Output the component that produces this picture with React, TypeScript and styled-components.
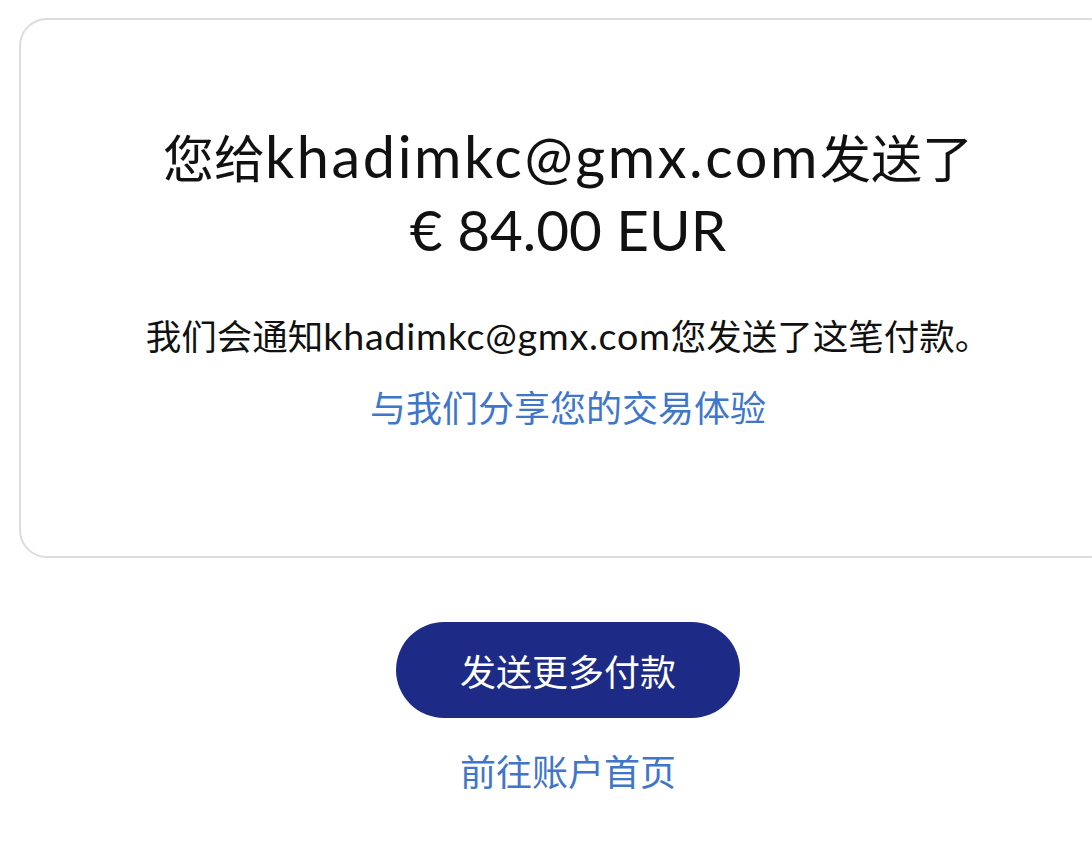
import styled, { createGlobalStyle } from "styled-components";

const GlobalStyle = createGlobalStyle`
  html, body {
    margin: 0;
    padding: 0;
    background: #ffffff;
    overflow: hidden;
  }
  body {
    font-family: "Lato", "Noto Sans CJK SC", sans-serif;
    color: #1a1a1a;
  }
`;

const EMAIL = "khadimkc@gmx.com";

const App = () => {
  return (
    <Page>
      <GlobalStyle />
      <Card>
        <Heading>
          您给<Latin $scale={1.13} $spacing={0.045}>{EMAIL}</Latin>发送了
          <br />
          <Latin $scale={1.11}>€ 84.00 EUR</Latin>
        </Heading>
        <Notice>
          我们会通知<Latin $scale={1.06} $spacing={0.02}>{EMAIL}</Latin>您发送了这笔付款。
        </Notice>
        <TextLink href="#">与我们分享您的交易体验</TextLink>
      </Card>

      <Actions>
        <PrimaryButton type="button">发送更多付款</PrimaryButton>
        <TextLink href="#">前往账户首页</TextLink>
      </Actions>
    </Page>
  );
};

const Page = styled.div`
  width: 100%;
  min-height: 842px;
  padding: 18px 0 0 19px;
  box-sizing: border-box;
  display: flex;
  flex-direction: column;
  align-items: flex-start;
`;

const Card = styled.section`
  width: 1098px;
  flex-shrink: 0;
  box-sizing: border-box;
  border: 2px solid #dcdcdc;
  border-radius: 28px;
  padding: 101px 20px 124px;
  display: flex;
  flex-direction: column;
  align-items: center;
  text-align: center;
`;

const Latin = styled.span<{ $scale: number; $spacing?: number }>`
  font-family: "Lato", sans-serif;
  font-size: ${(p) => p.$scale}em;
  letter-spacing: ${(p) => p.$spacing ?? 0}em;
`;

const Heading = styled.h1`
  margin: 0;
  font-size: 51px;
  line-height: 70px;
  font-weight: 400;
  color: #111111;
`;

const Notice = styled.p`
  margin: 45px 0 0;
  font-size: 35.5px;
  line-height: 48px;
  color: #111111;
`;

const TextLink = styled.a`
  margin-top: 23px;
  font-size: 36px;
  line-height: 48px;
  color: #3f76c9;
  text-decoration: none;
`;

const Actions = styled.div`
  width: 1098px;
  flex-shrink: 0;
  margin-top: 64px;
  display: flex;
  flex-direction: column;
  align-items: center;

  ${TextLink} {
    margin-top: 30px;
  }
`;

const PrimaryButton = styled.button`
  width: 344px;
  height: 96px;
  border: none;
  border-radius: 48px;
  background: #1d2b86;
  color: #ffffff;
  font-family: "Lato", "Noto Sans CJK SC", sans-serif;
  font-size: 36px;
  cursor: pointer;
`;

export default App;
